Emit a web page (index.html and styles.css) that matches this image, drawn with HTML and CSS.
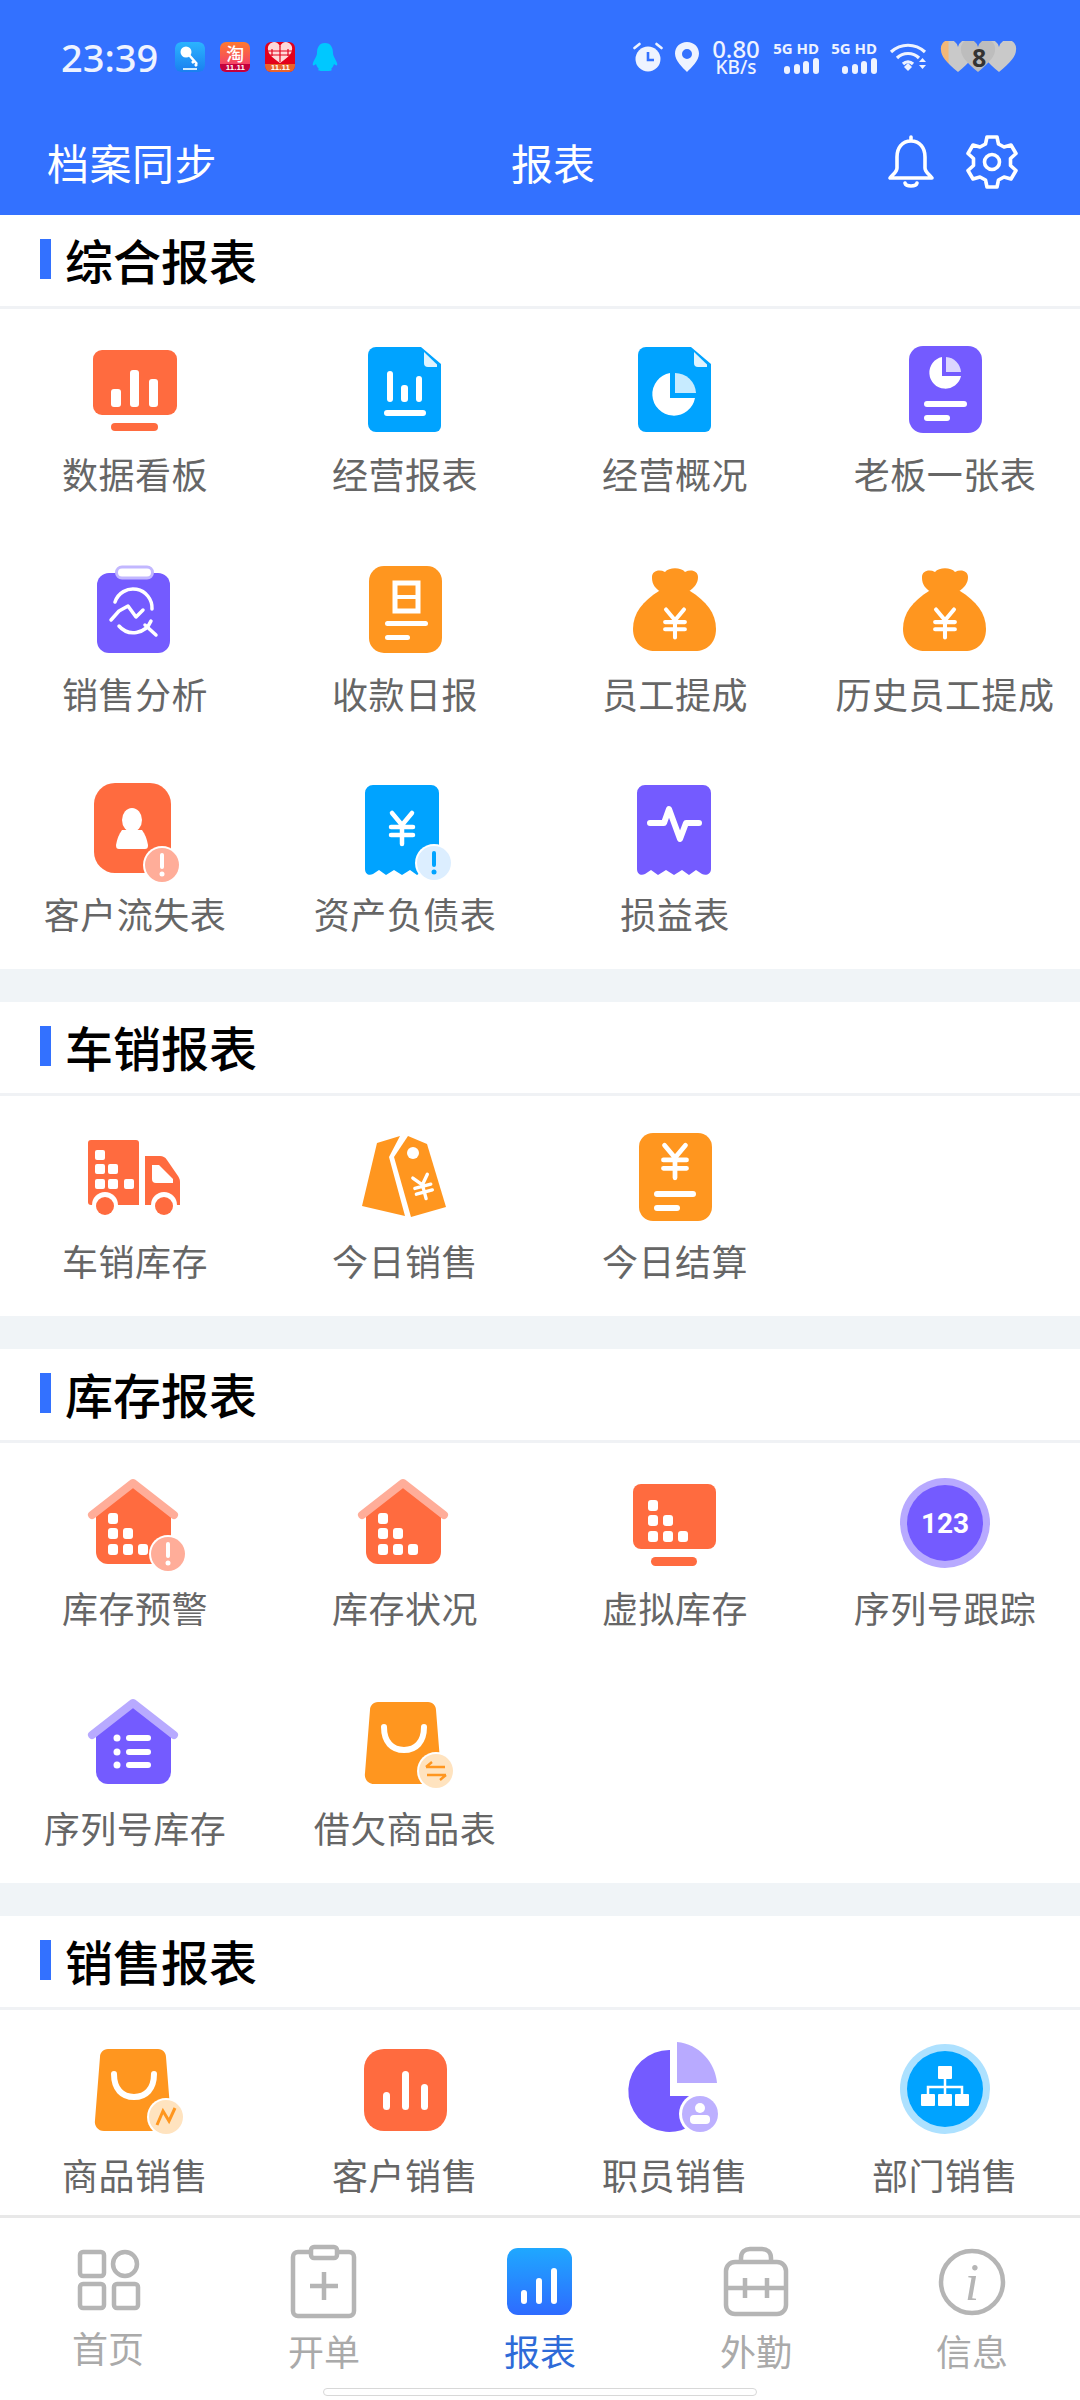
FILE: index.html
```html
<!DOCTYPE html>
<html lang="zh-CN">
<head>
    <meta charset="UTF-8">
    <meta name="viewport" content="width=device-width, initial-scale=1.0">
    <title>报表</title>
    <link rel="stylesheet" href="styles.css">
</head>
<body>
    <svg class="defs" width="0" height="0">
        <defs>
            <g id="yen" class="ln ln-yen">
                <path d="M-10 -15L0 -3L10 -15M-11 -1H11M-11 7H11M0 -3V16"/>
            </g>
            <path id="doc" d="M31 8H76L96 25V87a6 6 0 0 1-6 6H31a8 8 0 0 1-8-8V16a8 8 0 0 1 8-8z"/>
            <path id="fold" d="M79 13L92 25.500V28H83a4 4 0 0 1-4-4z"/>
            <path id="receipt" d="M29 6H86a8 8 0 0 1 8 8V90c0 5-5 7-9 5l-6-4-7 5-7-5-8 5-8-5-8 5-7-5-6 4c-4 2-8 0-8-5V14a8 8 0 0 1 8-8z"/>
            <path id="bag" d="M33 9H83c5 0 8 4 8 8L96 80c1 6-3 11-9 11H29c-6 0-10-5-9-11L25 17c0-4 3-8 8-8z"/>
            <path id="smile" d="M39 34C39 49 47 57 59 57S79 49 79 34" class="ln ln-smile"/>
            <path id="house-shell" d="M21 41L58 10L96 41V79a12 12 0 0 1-12 12H33a12 12 0 0 1-12-12z"/>
            <path id="roof" d="M17 42L58 10L99 42"/>
            <g id="windows" class="wh">
                <rect x="33" y="40" width="10" height="11" rx="3"/>
                <rect x="33" y="55" width="10" height="11" rx="3"/>
                <rect x="48" y="55" width="10" height="11" rx="3"/>
                <rect x="33" y="71" width="10" height="11" rx="3"/>
                <rect x="48" y="71" width="10" height="11" rx="3"/>
                <rect x="63" y="71" width="10" height="11" rx="3"/>
            </g>
        </defs>
    </svg>

    <header class="top">
        <div class="status">
            <div class="status-left">
                <span class="clock">23:39</span>
                <svg class="app" viewBox="0 0 30 30">
                    <defs><linearGradient id="keybg" x1="0" y1="0" x2="0" y2="1"><stop offset="0" stop-color="#2bb4ff"/><stop offset="1" stop-color="#1a7ff0"/></linearGradient></defs>
                    <rect width="30" height="30" rx="6" fill="url(#keybg)"/>
                    <circle cx="11" cy="10" r="5.5" fill="#fff"/>
                    <path d="M14 13L22 22M19 19l-2 2M22 22l-2 2" stroke="#fff" stroke-width="2.6" fill="none"/>
                    <rect x="8" y="26" width="14" height="2" fill="#cfeaff"/>
                </svg>
                <span class="app app-tao"><b>淘</b><i>11.11</i></span>
                <span class="app app-pdd"><svg viewBox="0 0 30 22"><path d="M15 21C6 15 3 11 3 7.5A5.5 5.5 0 0 1 15 5A5.5 5.5 0 0 1 27 7.5C27 11 24 15 15 21z" fill="#ffd9d9"/><path d="M15 4V20M7 7V14M23 7V14M3 9H27M5 13H25" stroke="#e3001b" stroke-width="1.2"/></svg><i>11.11</i></span>
                <svg class="qq" viewBox="0 0 26 28"><path d="M13 0C7 0 5 5 5 10C5 13 2 17 1 20C0 23 2 23 4 21C5 24 6 25 7 26C5 27 7 28 10 28H16C19 28 21 27 19 26C20 25 21 24 22 21C24 23 26 23 25 20C24 17 21 13 21 10C21 5 19 0 13 0z"/></svg>
            </div>
            <div class="status-right">
                <svg class="st-alarm" viewBox="0 0 30 30">
                    <circle cx="15" cy="17" r="12.5" fill="#eef3ff"/>
                    <path d="M15 10V18H21" stroke="#3371ff" stroke-width="2.6" fill="none"/>
                    <path d="M1.5 6L6.5 2M28.500 6L23.500 2" stroke="#eef3ff" stroke-width="2.600" stroke-linecap="round"/>
                </svg>
                <svg class="st-pin" viewBox="0 0 24 30"><path fill-rule="evenodd" d="M12 0C5 0 0 5 0 11.500C0 19 8 26 12 30C16 26 24 19 24 11.500C24 5 19 0 12 0zM12 7a5 5 0 1 1 0 10a5 5 0 0 1 0-10z" fill="#eef3ff"/></svg>
                <div class="speed"><span>0.80</span><span class="speed-unit">KB/s</span></div>
                <div class="net"><span>5G HD</span><svg viewBox="0 0 35 16"><g fill="#eef3ff"><rect x="0" y="8" width="6" height="8" rx="3"/><rect x="10" y="6" width="6" height="10" rx="3"/><rect x="19" y="3" width="6" height="13" rx="3"/><rect x="29" y="0" width="6" height="16" rx="3"/></g></svg></div>
                <div class="net"><span>5G HD</span><svg viewBox="0 0 35 16"><g fill="#eef3ff"><rect x="0" y="8" width="6" height="8" rx="3"/><rect x="10" y="6" width="6" height="10" rx="3"/><rect x="19" y="3" width="6" height="13" rx="3"/><rect x="29" y="0" width="6" height="16" rx="3"/></g></svg></div>
                <svg class="st-wifi" viewBox="0 0 39 30">
                    <path d="M2 10C12 1 26 1 36 10M8 16C14 10 24 10 30 16M14 22C17 19 21 19 24 22" stroke="#eef3ff" stroke-width="3.200" fill="none"/>
                    <path d="M15 25L19 21L23 25L19 29z" fill="#eef3ff"/>
                    <path d="M30 20L33.500 16L37 20zM30 23L33.500 27L37 23z" fill="#eef3ff"/>
                </svg>
                <div class="hearts">
                    <svg viewBox="0 0 77 32">
                        <defs><linearGradient id="hfill" x1="0" y1="0" x2="1" y2="0"><stop offset="0.2" stop-color="#f2b87a"/><stop offset="0.25" stop-color="#c9c9c9"/></linearGradient></defs>
                        <path d="M18 31C6 21 1 15 1 9A8 8 0 0 1 18 6A8 8 0 0 1 35 9C35 15 30 21 18 31z" fill="url(#hfill)"/>
                        <path d="M59 31C47 21 42 15 42 9A8 8 0 0 1 59 6A8 8 0 0 1 76 9C76 15 71 21 59 31z" fill="#c9c9c9"/>
                        <path d="M38 31C26 21 21 15 21 9A8 8 0 0 1 38 6A8 8 0 0 1 55 9C55 15 50 21 38 31z" fill="#bdbdbd"/>
                    </svg>
                    <span class="hearts-num">8</span>
                </div>
            </div>
        </div>
        <div class="titlebar">
            <span class="titlebar-left">档案同步</span>
            <span class="titlebar-title">报表</span>
            <div class="titlebar-right">
                <svg class="bar-icon" viewBox="0 0 48 54">
                    <path d="M24 6C15 6 10 13 10 22V33C10 37 6 39 3 43H45C42 39 38 37 38 33V22C38 13 33 6 24 6zM24 2V6M18 48C19 52 29 52 30 48" fill="none" stroke="#fff" stroke-width="3.600" stroke-linejoin="round" stroke-linecap="round"/>
                </svg>
                <svg class="bar-icon" viewBox="0 0 54 54">
                    <circle cx="27" cy="27" r="7.500" fill="none" stroke="#fff" stroke-width="3.600"/>
                    <path d="M22 2H32L33.500 9L39 12L46 10L51 18.500L45.500 23.500V30.500L51 35.500L46 44L39 42L33.500 45L32 52H22L20.500 45L15 42L8 44L3 35.500L8.500 30.500V23.500L3 18.500L8 10L15 12L20.500 9z" fill="none" stroke="#fff" stroke-width="3.600" stroke-linejoin="round"/>
                </svg>
            </div>
        </div>
    </header>

    <main class="content">
        <section class="sec">
            <h2 class="sec-head">综合报表</h2>
            <div class="grid">
                <div class="item">
                    <svg class="icon" viewBox="0 0 120 100">
                        <g class="red"><rect x="18" y="11" width="84" height="65" rx="9"/><rect x="36" y="84" width="47" height="8" rx="4"/></g>
                        <g class="wh"><rect x="36" y="50" width="10" height="18" rx="3"/><rect x="55" y="31" width="9" height="37" rx="3"/><rect x="74" y="40" width="9" height="28" rx="3"/></g>
                    </svg>
                    <span class="label">数据看板</span>
                </div>
                <div class="item">
                    <svg class="icon" viewBox="0 0 120 100">
                        <use href="#doc" class="sky"/><use href="#fold" class="pale"/>
                        <g class="wh"><rect x="42" y="32" width="6" height="31" rx="3"/><rect x="56" y="46" width="7" height="17" rx="3"/><rect x="71" y="37" width="6" height="26" rx="3"/><rect x="39" y="71" width="42" height="6" rx="3"/></g>
                    </svg>
                    <span class="label">经营报表</span>
                </div>
                <div class="item">
                    <svg class="icon" viewBox="0 0 120 100">
                        <use href="#doc" class="sky"/><use href="#fold" class="pale"/>
                        <path class="wh" d="M55 34V59H80A21.500 21.500 0 1 1 55 34z"/>
                        <path class="pale-sky" d="M60 34A21 21 0 0 1 81 54H60z"/>
                    </svg>
                    <span class="label">经营概况</span>
                </div>
                <div class="item">
                    <svg class="icon" viewBox="0 0 120 100">
                        <rect class="vio" x="24" y="7" width="73" height="87" rx="14"/>
                        <path class="wh" d="M57 18V37H76A16 16 0 1 1 57 18z"/>
                        <path class="pale-vio" d="M61 18A16 16 0 0 1 76 33H61z"/>
                        <g class="wh"><rect x="39" y="62" width="43" height="6" rx="3"/><rect x="39" y="76" width="26" height="6" rx="3"/></g>
                    </svg>
                    <span class="label">老板一张表</span>
                </div>

                <div class="item">
                    <svg class="icon" viewBox="0 0 120 100">
                        <rect class="vio" x="22" y="14" width="73" height="80" rx="12"/>
                        <rect x="41.500" y="8" width="36" height="11" rx="5.500" fill="#fff" stroke="#c2b7ff" stroke-width="3"/>
                        <path class="ln ln-thin" d="M40 43A19 19 0 0 1 77 50M76 62A19 19 0 0 1 44 67M70 66L81 76"/>
                        <path class="ln ln-thin" d="M36 61L44 52L53 47L61 58L68 51"/>
                    </svg>
                    <span class="label">销售分析</span>
                </div>
                <div class="item">
                    <svg class="icon" viewBox="0 0 120 100">
                        <rect class="ora" x="24" y="7" width="73" height="87" rx="15"/>
                        <rect x="50" y="24" width="23" height="28" fill="none" stroke="#fff" stroke-width="5"/>
                        <g class="wh"><rect x="50" y="36" width="23" height="4"/><rect x="40" y="62" width="43" height="5" rx="2.500"/><rect x="40" y="76" width="25" height="5" rx="2.500"/></g>
                    </svg>
                    <span class="label">收款日报</span>
                </div>
                <div class="item">
                    <svg class="icon" viewBox="0 0 120 100">
                        <g class="ora"><path d="M44 32C28 42 18 54 18 70C18 84 28 92 40 92H80C92 92 101 84 101 70C101 54 91 42 75 32z"/><path d="M46 33C38 28 37 23 37 18C37 12 44 10 50 13C54 8 66 8 70 13C76 10 83 12 83 18C83 24 80 28 73 33z"/></g>
                        <use href="#yen" transform="translate(60 64) scale(0.9)"/>
                    </svg>
                    <span class="label">员工提成</span>
                </div>
                <div class="item">
                    <svg class="icon" viewBox="0 0 120 100">
                        <g class="ora"><path d="M44 32C28 42 18 54 18 70C18 84 28 92 40 92H80C92 92 101 84 101 70C101 54 91 42 75 32z"/><path d="M46 33C38 28 37 23 37 18C37 12 44 10 50 13C54 8 66 8 70 13C76 10 83 12 83 18C83 24 80 28 73 33z"/></g>
                        <use href="#yen" transform="translate(60 64) scale(0.9)"/>
                    </svg>
                    <span class="label">历史员工提成</span>
                </div>

                <div class="item">
                    <svg class="icon" viewBox="0 0 120 100">
                        <rect class="red" x="19" y="4" width="77" height="90" rx="21"/>
                        <g class="wh"><ellipse cx="57" cy="41" rx="10" ry="12"/><path d="M47 51H67C70 55 72 60 73 66C73 69 72 70 70 70H44C42 70 41 69 41 66C42 60 44 55 47 51z"/></g>
                        <circle cx="87" cy="86" r="19" fill="#fff"/>
                        <circle cx="87" cy="86" r="17" fill="#ffad99"/>
                        <rect class="wh" x="85" y="74" width="4" height="16" rx="2"/><circle class="wh" cx="87" cy="95" r="2.500"/>
                    </svg>
                    <span class="label">客户流失表</span>
                </div>
                <div class="item">
                    <svg class="icon" viewBox="0 0 120 100">
                        <use href="#receipt" class="sky"/>
                        <use href="#yen" transform="translate(57 49)"/>
                        <circle cx="89" cy="84" r="19" fill="#fff"/>
                        <circle cx="89" cy="84" r="17" fill="#dceeff"/>
                        <rect class="sky" x="87" y="72" width="4" height="16" rx="2"/><circle class="sky" cx="89" cy="93" r="2.500"/>
                    </svg>
                    <span class="label">资产负债表</span>
                </div>
                <div class="item">
                    <svg class="icon" viewBox="0 0 120 100">
                        <use href="#receipt" class="vio" transform="translate(2 0)"/>
                        <path class="ln" d="M35 44H49L54 30L65 60L71 44H84"/>
                    </svg>
                    <span class="label">损益表</span>
                </div>
            </div>
        </section>

        <section class="sec">
            <h2 class="sec-head">车销报表</h2>
            <div class="grid">
                <div class="item">
                    <svg class="icon" viewBox="0 0 120 100">
                        <path class="red" d="M16 14H61a3 3 0 0 1 3 3V79H16a3 3 0 0 1-3-3V17a3 3 0 0 1 3-3z"/>
                        <path class="red" d="M70 30H85C88 30 90 31 92 34L103 50C104 52 105 53 105 56V79H70z"/>
                        <path class="wh" d="M77 39H84L98 53V57H81a4 4 0 0 1-4-4z"/>
                        <g class="wh">
                            <rect x="20" y="24" width="10" height="10" rx="2"/>
                            <rect x="20" y="38" width="10" height="10" rx="2"/><rect x="33" y="38" width="10" height="10" rx="2"/>
                            <rect x="20" y="53" width="10" height="10" rx="2"/><rect x="33" y="53" width="10" height="10" rx="2"/><rect x="49" y="53" width="10" height="10" rx="2"/>
                            <circle cx="30" cy="79" r="13"/><circle cx="89" cy="79" r="13"/>
                        </g>
                        <g class="red"><circle cx="30" cy="80" r="9"/><circle cx="89" cy="80" r="9"/></g>
                    </svg>
                    <span class="label">车销库存</span>
                </div>
                <div class="item">
                    <svg class="icon" viewBox="0 0 120 100">
                        <path class="ora" d="M32 17L55 10L44 31L60 90L17 80z"/>
                        <path class="ora" d="M63 10L82 18L101 81L66 91L49 31z"/>
                        <circle class="wh" cx="68" cy="27" r="6"/>
                        <use href="#yen" transform="translate(78 61) rotate(-15) scale(0.75)"/>
                    </svg>
                    <span class="label">今日销售</span>
                </div>
                <div class="item">
                    <svg class="icon" viewBox="0 0 120 100">
                        <rect class="ora" x="24" y="7" width="73" height="88" rx="14"/>
                        <use href="#yen" transform="translate(60 35) scale(1.050)"/>
                        <g class="wh"><rect x="39" y="65" width="42" height="6" rx="3"/><rect x="39" y="79" width="26" height="6" rx="3"/></g>
                    </svg>
                    <span class="label">今日结算</span>
                </div>
            </div>
        </section>

        <section class="sec">
            <h2 class="sec-head">库存报表</h2>
            <div class="grid">
                <div class="item">
                    <svg class="icon" viewBox="0 0 120 100">
                        <use href="#house-shell" class="red"/>
                        <use href="#roof" class="ln ln-roof-red"/>
                        <use href="#windows"/>
                        <circle cx="93" cy="81" r="19" fill="#fff"/>
                        <circle cx="93" cy="81" r="17" fill="#ffad99"/>
                        <rect class="wh" x="91" y="69" width="4" height="16" rx="2"/><circle class="wh" cx="93" cy="90" r="2.500"/>
                    </svg>
                    <span class="label">库存预警</span>
                </div>
                <div class="item">
                    <svg class="icon" viewBox="0 0 120 100">
                        <use href="#house-shell" class="red"/>
                        <use href="#roof" class="ln ln-roof-red"/>
                        <use href="#windows"/>
                    </svg>
                    <span class="label">库存状况</span>
                </div>
                <div class="item">
                    <svg class="icon" viewBox="0 0 120 100">
                        <g class="red"><rect x="18" y="11" width="83" height="65" rx="8"/><rect x="36" y="84" width="46" height="9" rx="4.500"/></g>
                        <use href="#windows" transform="translate(0 -13)"/>
                    </svg>
                    <span class="label">虚拟库存</span>
                </div>
                <div class="item">
                    <svg class="icon" viewBox="0 0 120 100">
                        <circle cx="60" cy="50" r="45" fill="#b8aaff"/>
                        <circle class="vio" cx="60" cy="50" r="38"/>
                        <text class="num-123" x="60" y="60">123</text>
                    </svg>
                    <span class="label">序列号跟踪</span>
                </div>

                <div class="item">
                    <svg class="icon" viewBox="0 0 120 100">
                        <use href="#house-shell" class="vio"/>
                        <use href="#roof" class="ln ln-roof-vio"/>
                        <g class="wh">
                            <circle cx="42" cy="45" r="3.500"/><circle cx="42" cy="59" r="3.500"/><circle cx="42" cy="72" r="3.500"/>
                            <rect x="51" y="42" width="25" height="6" rx="3"/><rect x="51" y="56" width="25" height="6" rx="3"/><rect x="51" y="69" width="25" height="6" rx="3"/>
                        </g>
                    </svg>
                    <span class="label">序列号库存</span>
                </div>
                <div class="item">
                    <svg class="icon" viewBox="0 0 120 100">
                        <use href="#bag" class="ora"/>
                        <use href="#smile"/>
                        <circle cx="91" cy="78" r="19" fill="#fff"/>
                        <circle cx="91" cy="78" r="17" fill="#ffe3bf"/>
                        <path d="M81 74H100M81 74L87 69M101 82H82M101 82L95 87" fill="none" stroke="#ff961f" stroke-width="2.400"/>
                    </svg>
                    <span class="label">借欠商品表</span>
                </div>
            </div>
        </section>

        <section class="sec">
            <h2 class="sec-head">销售报表</h2>
            <div class="grid">
                <div class="item">
                    <svg class="icon" viewBox="0 0 120 100">
                        <use href="#bag" class="ora"/>
                        <use href="#smile"/>
                        <circle cx="91" cy="77" r="19" fill="#fff"/>
                        <circle cx="91" cy="77" r="17" fill="#ffe3bf"/>
                        <path d="M82 85L88 71L94 81L100 68" fill="none" stroke="#ff961f" stroke-width="3"/>
                    </svg>
                    <span class="label">商品销售</span>
                </div>
                <div class="item">
                    <svg class="icon" viewBox="0 0 120 100">
                        <rect class="red" x="19" y="9" width="83" height="82" rx="20"/>
                        <g class="wh"><rect x="38" y="52" width="7" height="18" rx="3.500"/><rect x="57" y="31" width="7" height="39" rx="3.500"/><rect x="76" y="44" width="7" height="26" rx="3.500"/></g>
                    </svg>
                    <span class="label">客户销售</span>
                </div>
                <div class="item">
                    <svg class="icon" viewBox="0 0 120 100">
                        <path class="vio" d="M55 10V56H95A41 41 0 1 1 55 10z"/>
                        <path fill="#b8aaff" d="M62 2C84 4 100 22 102 43H62z"/>
                        <circle cx="85" cy="74" r="21" fill="#fff"/>
                        <circle cx="85" cy="74" r="18" fill="#bdb0ff"/>
                        <g class="wh"><circle cx="85" cy="68" r="5"/><rect x="75" y="75" width="20" height="9" rx="4"/></g>
                    </svg>
                    <span class="label">职员销售</span>
                </div>
                <div class="item">
                    <svg class="icon" viewBox="0 0 120 100">
                        <circle cx="60" cy="49" r="45" fill="#ade1ff"/>
                        <circle class="sky" cx="60" cy="49" r="38"/>
                        <g class="wh">
                            <rect x="53" y="26" width="14" height="13" rx="1"/>
                            <rect x="36" y="54" width="14" height="12" rx="1"/><rect x="53" y="54" width="14" height="12" rx="1"/><rect x="70" y="54" width="14" height="12" rx="1"/>
                        </g>
                        <path d="M60 39V54M43 54V47H77V54" fill="none" stroke="#fff" stroke-width="2.500"/>
                    </svg>
                    <span class="label">部门销售</span>
                </div>
            </div>
        </section>
    </main>

    <nav class="tabs">
        <div class="tab tab-home">
            <svg viewBox="0 0 80 90" class="tab-gray">
                <rect x="12" y="12" width="24" height="24" rx="3"/>
                <circle cx="57" cy="24" r="12"/>
                <rect x="12" y="44" width="24" height="24" rx="3"/>
                <rect x="46" y="44" width="24" height="24" rx="3"/>
            </svg>
            <span>首页</span>
        </div>
        <div class="tab">
            <svg viewBox="0 0 80 90" class="tab-gray">
                <path d="M28 12H14a5 5 0 0 0-5 5V71a5 5 0 0 0 5 5H65a5 5 0 0 0 5-5V17a5 5 0 0 0-5-5H52"/>
                <rect x="27" y="7" width="26" height="11" rx="3"/>
                <path d="M40 32V60M26 46H54"/>
            </svg>
            <span>开单</span>
        </div>
        <div class="tab tab-active">
            <svg viewBox="0 0 80 90">
                <defs><linearGradient id="tabbg" x1="0" y1="0" x2="0" y2="1"><stop offset="0" stop-color="#1fa8ff"/><stop offset="1" stop-color="#2e6bff"/></linearGradient></defs>
                <rect x="7" y="8" width="65" height="67" rx="11" fill="url(#tabbg)"/>
                <g class="wh"><rect x="21" y="50" width="6" height="14" rx="3"/><rect x="36" y="38" width="6" height="26" rx="3"/><rect x="51" y="28" width="6" height="36" rx="3"/></g>
            </svg>
            <span>报表</span>
        </div>
        <div class="tab">
            <svg viewBox="0 0 80 90" class="tab-gray">
                <rect x="10" y="22" width="60" height="52" rx="9"/>
                <path d="M25 22V18C25 12 29 9 34 9H46C51 9 55 12 55 18V22"/>
                <path d="M10 48H70M29 38V58M51 38V58"/>
            </svg>
            <span>外勤</span>
        </div>
        <div class="tab">
            <svg viewBox="0 0 80 90" class="tab-gray">
                <circle cx="40" cy="42" r="31"/>
                <text class="tab-i" x="40" y="60">i</text>
            </svg>
            <span>信息</span>
        </div>
        <div class="home-bar"></div>
    </nav>
</body>
</html>
```

FILE: styles.css
```css
* {
    box-sizing: border-box;
}
body {
    margin: 0;
    width: 1080px;
    height: 2400px;
    display: flex;
    flex-direction: column;
    overflow: hidden;
    background: #fff;
    font-family: "Noto Sans CJK SC", "Noto Sans", sans-serif;
}
.defs {
    position: absolute;
}

/* header */
.top {
    height: 215px;
    flex: none;
    background: #3371ff;
    color: #fff;
}
.status {
    height: 114px;
    display: flex;
    align-items: center;
    justify-content: space-between;
    padding: 0 63px 0 61px;
}
.status-left, .status-right {
    display: flex;
    align-items: center;
}
.status-left {
    gap: 15px;
}
.status-right {
    gap: 12px;
}
.clock {
    margin-right: 2px;
    font-family: "Noto Sans", sans-serif;
    font-size: 38px;
    font-weight: 500;
    color: #eef3ff;
    white-space: nowrap;
}
.app {
    width: 30px;
    height: 30px;
    flex: none;
    border-radius: 6px;
}
.app-tao, .app-pdd {
    display: flex;
    flex-direction: column;
    align-items: center;
    color: #fff;
}
.app-tao {
    background: linear-gradient(#ff7a2e, #f0307a);
}
.app-tao b {
    height: 22px;
    font-size: 18px;
    line-height: 22px;
    font-weight: 500;
}
.app-pdd {
    background: #e3001b;
}
.app-pdd svg {
    width: 30px;
    height: 22px;
    flex: none;
}
.app i {
    width: 100%;
    height: 8px;
    border-radius: 0 0 6px 6px;
    font-family: "Liberation Sans", sans-serif;
    font-size: 8px;
    line-height: 8px;
    font-style: normal;
    font-weight: 700;
    text-align: center;
}
.app-tao i {
    background: #c4003c;
}
.app-pdd i {
    background: #e8632c;
}
.qq {
    width: 26px;
    height: 28px;
    margin-left: 2px;
    fill: #00c8ff;
}
.st-alarm {
    width: 30px;
    height: 30px;
}
.st-pin {
    width: 24px;
    height: 30px;
}
.speed {
    width: 50px;
    display: flex;
    flex-direction: column;
    align-items: center;
    font-family: "Noto Sans", sans-serif;
    font-size: 24px;
    line-height: 21px;
    font-weight: 500;
    color: #eef3ff;
}
.speed-unit {
    font-size: 19px;
    line-height: 17px;
}
.net {
    width: 46px;
    display: flex;
    flex-direction: column;
    align-items: flex-end;
    gap: 2px;
    font-family: "Noto Sans", sans-serif;
    font-size: 15px;
    line-height: 16px;
    font-weight: 700;
    color: #eef3ff;
    white-space: nowrap;
}
.net svg {
    width: 35px;
    height: 16px;
}
.st-wifi {
    width: 39px;
    height: 30px;
}
.hearts {
    width: 77px;
    height: 32px;
    position: relative;
}
.hearts svg {
    display: block;
    width: 77px;
    height: 32px;
}
.hearts-num {
    position: absolute;
    left: 32px;
    top: 0;
    font-family: "Noto Sans", sans-serif;
    font-size: 25px;
    line-height: 32px;
    font-weight: 700;
    color: #333;
}

.titlebar {
    height: 101px;
    display: flex;
    align-items: center;
    padding: 0 61px 6px 47px;
}
.titlebar-left {
    width: 170px;
    font-size: 42px;
    letter-spacing: 0.5px;
    white-space: nowrap;
}
.titlebar-title {
    margin-left: 294px;
    font-size: 42px;
}
.titlebar-right {
    margin-left: auto;
    display: flex;
    align-items: center;
    gap: 30px;
}
.bar-icon {
    width: 48px;
    height: 54px;
}
.bar-icon + .bar-icon {
    width: 54px;
}

/* report sections */
.content {
    flex: 1;
    overflow: hidden;
    background: #f0f4f7;
}
.sec {
    background: #fff;
    margin-bottom: 33px;
}
.sec-head {
    height: 94px;
    margin: 0;
    display: flex;
    align-items: center;
    gap: 14px;
    padding: 0 0 3px 40px;
    border-bottom: 3px solid #f0f2f5;
    font-size: 48px;
    font-weight: 500;
    color: #000;
}
.sec-head::before {
    content: "";
    width: 11px;
    height: 40px;
    background: #3371ff;
}
.grid {
    display: grid;
    grid-template-columns: repeat(4, 270px);
}
.item {
    height: 220px;
    padding-top: 30px;
    display: flex;
    flex-direction: column;
    align-items: center;
}
.icon {
    width: 120px;
    height: 100px;
    flex: none;
    overflow: visible;
}
.label {
    margin-top: 9px;
    font-size: 36px;
    line-height: 50px;
    letter-spacing: 0.5px;
    color: #666;
    white-space: nowrap;
}

/* icon colours */
.red { fill: #ff6b3f; }
.sky { fill: #00a3ff; }
.vio { fill: #745bff; }
.ora { fill: #ff961f; }
.wh { fill: #fff; }
.pale { fill: #e0f4ff; }
.pale-sky { fill: #c7ebff; }
.pale-vio { fill: #dcd6ff; }
.ln {
    fill: none;
    stroke: #fff;
    stroke-width: 6px;
    stroke-linecap: round;
    stroke-linejoin: round;
}
.ln-yen { stroke-width: 4.5px; }
.ln-thin { stroke-width: 3.5px; }
.ln-smile { stroke-width: 6px; }
.ln-roof-red { stroke: #ffad99; stroke-width: 8px; }
.ln-roof-vio { stroke: #b8aaff; stroke-width: 8px; }
.num-123 {
    font-family: "Roboto", sans-serif;
    font-size: 28px;
    font-weight: 700;
    fill: #fff;
    text-anchor: middle;
}

/* bottom tabs */
.tabs {
    height: 185px;
    flex: none;
    display: flex;
    position: relative;
    background: #fff;
    border-top: 3px solid #e8e8e8;
}
.tab {
    width: 216px;
    padding-top: 22px;
    display: flex;
    flex-direction: column;
    align-items: center;
    font-size: 36px;
    line-height: 40px;
    color: #aaa;
}
.tab svg {
    width: 80px;
    height: 90px;
    flex: none;
}
.tab-home span {
    margin-top: -3px;
}
.tab-active span {
    color: #2e6bd8;
}
.tab-gray {
    fill: none;
    stroke: #b5b5b5;
    stroke-width: 4.5px;
}
.tab-i {
    font-family: "Liberation Serif", serif;
    font-size: 52px;
    font-style: italic;
    fill: #b5b5b5;
    stroke: none;
    text-anchor: middle;
}
.home-bar {
    position: absolute;
    left: 323px;
    bottom: 4px;
    width: 434px;
    height: 8px;
    background: #fff;
    border: 1px solid #d8d8d8;
    border-radius: 4px;
}
```
